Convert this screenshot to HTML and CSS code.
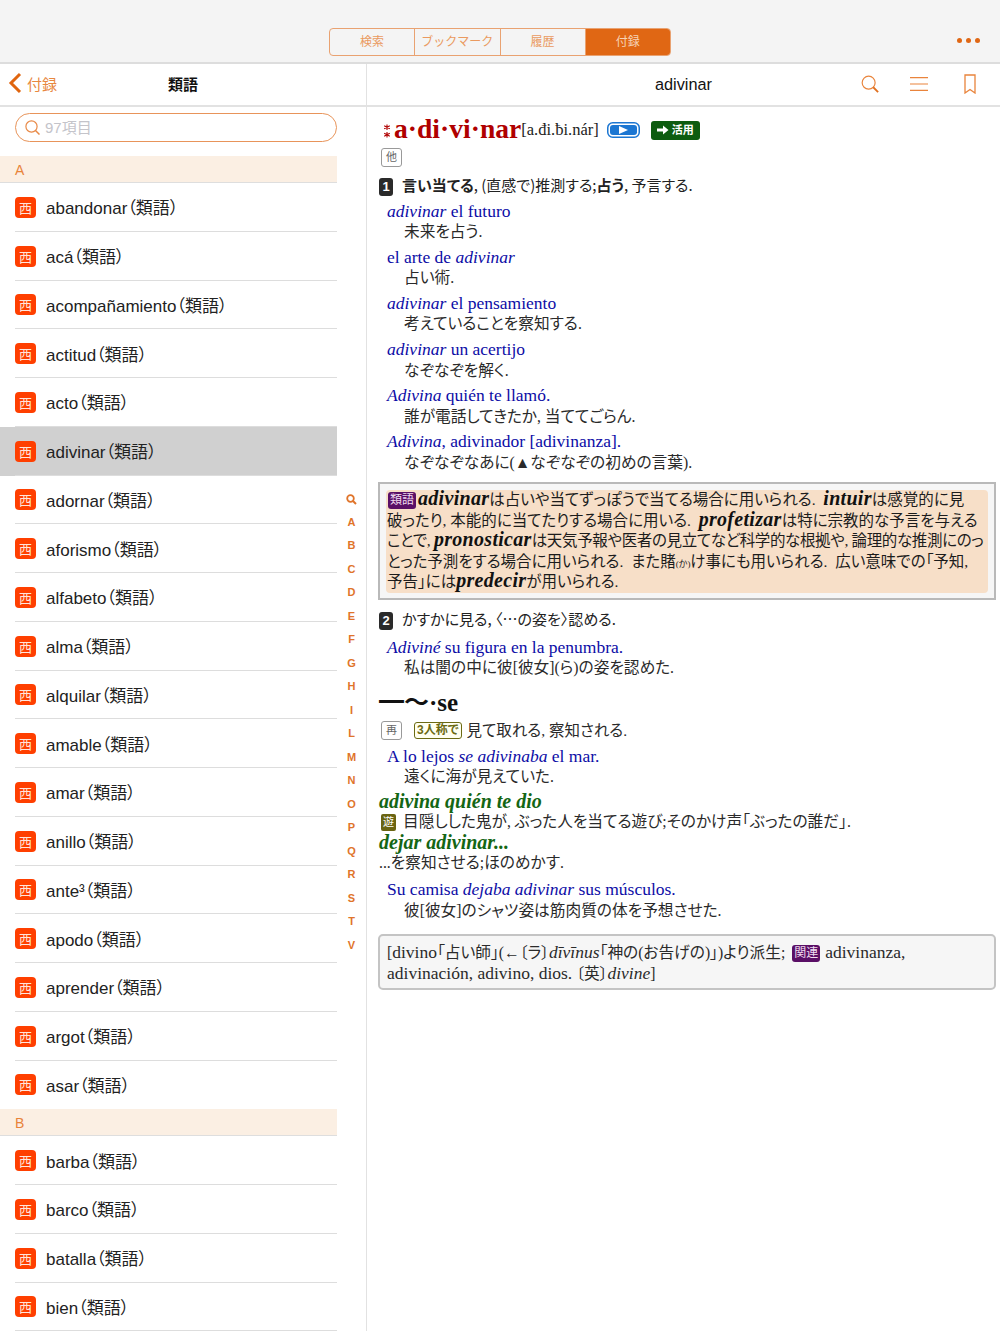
FILE: index.html
```html
<!DOCTYPE html>
<html lang="ja">
<head>
  <meta charset="UTF-8">
  <meta name="viewport" content="width=device-width, initial-scale=1.0">
  <title>adivinar</title>
  <link rel="stylesheet" href="styles.css">
</head>
<body>
  <div class="app">
    <header class="topbar">
      <div class="tabs">
        <div class="tab">検索</div>
        <div class="tab">ブックマーク</div>
        <div class="tab">履歴</div>
        <div class="tab active">付録</div>
      </div>
      <div class="more"><span></span><span></span><span></span></div>
    </header>

    <div class="main">
      <aside class="side">
        <div class="side-nav">
          <div class="back">
            <svg width="14" height="22" viewBox="0 0 14 22"><path d="M12 2 L3 11 L12 20" fill="none" stroke="#e0650f" stroke-width="3"/></svg>
            <span>付録</span>
          </div>
          <div class="side-title">類語</div>
        </div>
        <div class="search-wrap">
          <div class="search">
            <svg width="15" height="15" viewBox="0 0 15 15"><circle cx="6.5" cy="6.5" r="5.6" fill="none" stroke="#e88a48" stroke-width="1.2"/><path d="M10.5 10.5 L14.5 14.5" stroke="#e88a48" stroke-width="1.5"/></svg>
            <span>97項目</span>
          </div>
        </div>
        <div class="side-body">
          <div class="list">
            <div class="section">A</div>
            <div class="row"><i class="mark">西</i><span>abandonar（類語）</span></div>
            <div class="row"><i class="mark">西</i><span>acá（類語）</span></div>
            <div class="row"><i class="mark">西</i><span>acompañamiento（類語）</span></div>
            <div class="row"><i class="mark">西</i><span>actitud（類語）</span></div>
            <div class="row"><i class="mark">西</i><span>acto（類語）</span></div>
            <div class="row selected"><i class="mark">西</i><span>adivinar（類語）</span></div>
            <div class="row"><i class="mark">西</i><span>adornar（類語）</span></div>
            <div class="row"><i class="mark">西</i><span>aforismo（類語）</span></div>
            <div class="row"><i class="mark">西</i><span>alfabeto（類語）</span></div>
            <div class="row"><i class="mark">西</i><span>alma（類語）</span></div>
            <div class="row"><i class="mark">西</i><span>alquilar（類語）</span></div>
            <div class="row"><i class="mark">西</i><span>amable（類語）</span></div>
            <div class="row"><i class="mark">西</i><span>amar（類語）</span></div>
            <div class="row"><i class="mark">西</i><span>anillo（類語）</span></div>
            <div class="row"><i class="mark">西</i><span>ante³（類語）</span></div>
            <div class="row"><i class="mark">西</i><span>apodo（類語）</span></div>
            <div class="row"><i class="mark">西</i><span>aprender（類語）</span></div>
            <div class="row"><i class="mark">西</i><span>argot（類語）</span></div>
            <div class="row last"><i class="mark">西</i><span>asar（類語）</span></div>
            <div class="section">B</div>
            <div class="row"><i class="mark">西</i><span>barba（類語）</span></div>
            <div class="row"><i class="mark">西</i><span>barco（類語）</span></div>
            <div class="row"><i class="mark">西</i><span>batalla（類語）</span></div>
            <div class="row"><i class="mark">西</i><span>bien（類語）</span></div>
          </div>
          <div class="index">
            <div><svg width="11" height="11" viewBox="0 0 11 11"><circle cx="4.5" cy="4.5" r="3.3" fill="none" stroke="#e0742a" stroke-width="1.8"/><path d="M7 7 L10 10" stroke="#e0742a" stroke-width="2"/></svg></div>
            <div>A</div><div>B</div><div>C</div><div>D</div><div>E</div><div>F</div><div>G</div><div>H</div><div>I</div>
            <div>L</div><div>M</div><div>N</div><div>O</div><div>P</div><div>Q</div><div>R</div><div>S</div><div>T</div><div>V</div>
          </div>
        </div>
      </aside>

      <section class="detail">
        <div class="detail-nav">
          <div class="detail-title">adivinar</div>
          <div class="detail-icons">
            <svg class="icon-search" width="18" height="18" viewBox="0 0 20 20"><circle cx="8.5" cy="8.5" r="7.2" fill="none" stroke="#e9843c" stroke-width="1.3"/><path d="M13.6 13.6 L19 19" stroke="#e0701f" stroke-width="2"/></svg>
            <svg class="icon-menu" width="18" height="14" viewBox="0 0 18 14"><path d="M0 .7 H18 M0 7 H18 M0 13.3 H18" stroke="#e9843c" stroke-width="1.2"/></svg>
            <svg width="12" height="20" viewBox="0 0 12 20"><path d="M1 1 H11 V19 L6 15.5 L1 19 Z" fill="none" stroke="#e9843c" stroke-width="1.3"/></svg>
          </div>
        </div>

        <article class="entry">
          <div class="head">
            <svg class="stars" width="8" height="14" viewBox="0 0 8 14"><path d="M4 .5 V6 M1.2 1.8 L6.8 4.8 M6.8 1.8 L1.2 4.8 M4 8 V13.5 M1.2 9.3 L6.8 12.2 M6.8 9.3 L1.2 12.2" stroke="#b00000" stroke-width="1.1"/></svg>
            <span class="word">a·di·vi·nar</span>
            <span class="pron">[a.đi.ƀi.nár]</span>
            <svg class="audio" width="33" height="16" viewBox="0 0 33 16"><rect x="0.75" y="0.75" width="31.5" height="14.5" rx="5" fill="#fff" stroke="#1b76d2" stroke-width="1.5"/><rect x="3" y="3" width="27" height="10" rx="3" fill="#1b76d2"/><path d="M12 4 L21 8 L12 12 Z" fill="#fff"/></svg>
            <span class="conj"><svg width="12" height="10" viewBox="0 0 12 10"><path d="M0 3.5 H6 V0.5 L11.5 5 L6 9.5 V6.5 H0 Z" fill="#fff"/></svg>活用</span>
          </div>
          <div class="pos-line"><span class="tag">他</span></div>

          <p class="sense"><span class="num">1</span><b>言い当てる</b>, (直感で)推測する;<b>占う</b>, 予言する.</p>

          <div class="ex">
            <div class="es"><em>adivinar</em> el futuro</div>
            <div class="ja">未来を占う.</div>
          </div>
          <div class="ex">
            <div class="es">el arte de <em>adivinar</em></div>
            <div class="ja">占い術.</div>
          </div>
          <div class="ex">
            <div class="es"><em>adivinar</em> el pensamiento</div>
            <div class="ja">考えていることを察知する.</div>
          </div>
          <div class="ex">
            <div class="es"><em>adivinar</em> un acertijo</div>
            <div class="ja">なぞなぞを解く.</div>
          </div>
          <div class="ex">
            <div class="es"><em>Adivina</em> quién te llamó.</div>
            <div class="ja">誰が電話してきたか, 当ててごらん.</div>
          </div>
          <div class="ex">
            <div class="es"><em>Adivina</em>, adivinador [adivinanza].</div>
            <div class="ja">なぞなぞなあに(▲なぞなぞの初めの言葉).</div>
          </div>

          <div class="usage">
            <div class="usage-inner"><span class="label">類語</span><strong>adivinar</strong>は占いや当てずっぽうで当てる場合に用いられる.&ensp;<strong>intuir</strong>は感覚的に見<br>破ったり, 本能的に当てたりする場合に用いる.&ensp;<strong>profetizar</strong>は特に宗教的な予言を与える<br><span class="tight">ことで, <strong>pronosticar</strong>は天気予報や医者の見立てなど科学的な根拠や, 論理的な推測にのっ</span><br>とった予測をする場合に用いられる.&ensp;また賭<small>(か)</small>け事にも用いられる.&ensp;広い意味での「予知,<br>予告」には<strong>predecir</strong>が用いられる.</div>
          </div>

          <p class="sense second"><span class="num">2</span>かすかに見る, 〈…の姿を〉認める.</p>
          <div class="ex">
            <div class="es"><em>Adiviné</em> su figura en la penumbra.</div>
            <div class="ja">私は闇の中に彼[彼女](ら)の姿を認めた.</div>
          </div>

          <h3 class="sub">━〜·se</h3>
          <p class="sense-plain"><span class="tag">再</span><span class="tag-olive">3人称で</span>見て取れる, 察知される.</p>
          <div class="ex">
            <div class="es">A lo lejos <em>se adivinaba</em> el mar.</div>
            <div class="ja">遠くに海が見えていた.</div>
          </div>

          <div class="idiom">adivina quién te dio</div>
          <p class="idiom-def"><span class="play">遊</span>目隠しした鬼が, ぶった人を当てる遊び;そのかけ声「ぶったの誰だ」.</p>
          <div class="idiom">dejar adivinar...</div>
          <p class="idiom-def">...を察知させる;ほのめかす.</p>
          <div class="ex">
            <div class="es">Su camisa <em>dejaba adivinar</em> sus músculos.</div>
            <div class="ja">彼[彼女]のシャツ姿は筋肉質の体を予想させた.</div>
          </div>

          <div class="etym">[<span class="la">divino</span>「占い師」(←〔ラ〕<em class="la">dīvīnus</em>「神の(お告げの)」)より派生; <span class="label">関連</span> <span class="la">adivinanza,</span><br><span class="la">adivinación, adivino, dios.</span> 〔英〕<em class="la">divine</em>]</div>
        </article>
      </section>
    </div>
  </div>
</body>
</html>
```

FILE: styles.css
```css
* {
  box-sizing: border-box;
}

html, body {
  margin: 0;
  padding: 0;
  background-color: #ffffff;
}

body {
  font-family: "Liberation Sans", "Noto Sans CJK JP", sans-serif;
  color: #1c1c1c;
}

.app {
  width: 1000px;
  height: 1334px;
  overflow: hidden;
}

/* top bar */
.topbar {
  height: 64px;
  background-color: #f4f4f4;
  border-bottom: 2px solid #dddddd;
  padding: 28px 20px 0 329px;
  display: flex;
  justify-content: space-between;
}

.tabs {
  display: flex;
  width: 342px;
  height: 28px;
  border: 1px solid #e9a271;
  border-radius: 4px;
  overflow: hidden;
}

.tab {
  flex: 1;
  font-size: 12px;
  line-height: 27px;
  text-align: center;
  color: #ea9a60;
  border-right: 1px solid #e9a271;
}

.tab.active {
  background-color: #e06714;
  color: #f6d3b6;
  border-right: none;
}

.more {
  display: flex;
  gap: 4px;
  padding-top: 10px;
}

.more span {
  width: 5px;
  height: 5px;
  border-radius: 50%;
  background-color: #e06714;
}

.main {
  display: flex;
}

/* left column */
.side {
  width: 367px;
  flex-shrink: 0;
  border-right: 1px solid #e2e2e2;
}

.side-nav {
  position: relative;
  height: 43px;
  border-bottom: 2px solid #e2e2e2;
  display: flex;
  align-items: center;
  justify-content: center;
}

.back {
  position: absolute;
  left: 8px;
  top: 8px;
  display: flex;
  align-items: center;
  gap: 5px;
  font-size: 15px;
  color: #e8873f;
}

.side-title {
  font-size: 15px;
  font-weight: bold;
  color: #111111;
  padding-bottom: 2px;
}

.search-wrap {
  padding: 6px 29px 14px 15px;
}

.search {
  height: 29px;
  border: 1px solid #e8945a;
  border-radius: 15px;
  display: flex;
  align-items: center;
  gap: 5px;
  padding-left: 9px;
  font-size: 15px;
  color: #c4c4ca;
}

.search span {
  padding-bottom: 2px;
}

.side-body {
  display: flex;
}

.list {
  width: 337px;
  flex-shrink: 0;
}

.section {
  height: 27px;
  background-color: #fbefe3;
  border-bottom: 1px solid #dedede;
  padding-left: 15px;
  font-size: 14px;
  line-height: 29px;
  color: #e8833a;
}

.row {
  height: 48.75px;
  display: flex;
  align-items: center;
  gap: 10px;
  padding-left: 15px;
  font-size: 17px;
  font-feature-settings: "palt";
  color: #222222;
  position: relative;
}

.row span {
  padding-bottom: 1px;
}

.row::after {
  content: "";
  position: absolute;
  left: 15px;
  right: 0;
  bottom: 0;
  height: 1px;
  background-color: #dddddd;
}

.row.last::after {
  display: none;
}

.row.selected {
  background-color: #d0d0d0;
}

.mark {
  width: 21px;
  height: 21px;
  border-radius: 4px;
  background-color: #ff3f00;
  color: #ffe6dc;
  font-style: normal;
  font-size: 13px;
  display: flex;
  align-items: center;
  justify-content: center;
}

.index {
  flex: 1;
  padding-top: 331px;
  font-size: 11px;
  font-weight: bold;
  color: #e0742a;
  text-align: center;
}

.index div {
  height: 23.5px;
  line-height: 23.5px;
}

.index svg {
  vertical-align: middle;
}

/* right column */
.detail {
  flex: 1;
  min-width: 0;
}

.detail-nav {
  position: relative;
  height: 43px;
  border-bottom: 2px solid #e2e2e2;
  display: flex;
  align-items: center;
  justify-content: center;
}

.detail-title {
  font-size: 16.3px;
  color: #111111;
}

.detail-icons {
  position: absolute;
  right: 24px;
  top: 10px;
  display: flex;
  align-items: center;
}

.icon-search {
  margin-right: 31px;
}

.icon-menu {
  margin-right: 36px;
}

.entry {
  padding: 9px 4px 0 12px;
  font-family: "Liberation Serif", "Noto Sans CJK JP", serif;
  font-size: 17.5px;
  line-height: 20.5px;
  font-feature-settings: "palt";
}

.head {
  display: flex;
  align-items: center;
  height: 27px;
  padding-left: 4px;
  padding-top: 1px;
}

.stars {
  margin-right: 3px;
  margin-top: 2px;
}

.word {
  font-size: 27.6px;
  font-weight: bold;
  color: #b00000;
  margin-top: -2px;
}

.pron {
  font-size: 16.5px;
  margin-right: 8px;
}

.audio {
  margin-right: 11px;
}

.conj {
  display: flex;
  align-items: center;
  gap: 3px;
  height: 19px;
  padding: 0 6px;
  background-color: #0d5c10;
  border-radius: 3px;
  font-family: "Liberation Sans", "Noto Sans CJK JP", sans-serif;
  font-size: 11px;
  font-weight: bold;
  color: #ffffff;
}

.pos-line {
  height: 32px;
  padding: 5px 0 0 2px;
}

.tag {
  display: inline-block;
  width: 21px;
  height: 19px;
  border: 1px solid #999999;
  border-radius: 3px;
  font-family: "Liberation Sans", "Noto Sans CJK JP", sans-serif;
  font-size: 11px;
  line-height: 17px;
  text-align: center;
  color: #666666;
  vertical-align: top;
}

.sense {
  margin: 0 0 5px;
  height: 20.5px;
  font-family: "Noto Sans CJK JP", sans-serif;
  font-size: 15px;
  color: #222222;
}

.num {
  display: inline-block;
  width: 14px;
  height: 18px;
  margin-right: 9px;
  background-color: #2a2a2a;
  border-radius: 3px;
  color: #ffffff;
  font-family: "Liberation Sans", sans-serif;
  font-weight: bold;
  font-size: 13px;
  line-height: 18px;
  text-align: center;
}

.ex {
  padding-left: 8px;
  margin-bottom: 4.2px;
}

.es {
  color: #0c0ca6;
}

.ja {
  padding: 1px 0 0 17px;
  font-size: 15.7px;
  color: #2a2a2a;
}

.usage {
  margin: 9px 0 9px -1px;
  height: 118px;
  padding: 6px 6px;
  border: 2px solid #b9b9b9;
  background-color: #f6f6f6;
}

.usage-inner {
  background-color: #f7dfc8;
  border-radius: 4px;
  padding-left: 1px;
  font-size: 15.5px;
  white-space: nowrap;
  color: #1c1c1c;
}

.usage strong {
  font-size: 20px;
  line-height: 0;
  letter-spacing: 0.3px;
  font-style: italic;
  color: #111111;
}

.usage small {
  font-size: 9px;
  line-height: 0;
}

.tight {
  letter-spacing: -0.35px;
}

.label {
  display: inline-block;
  height: 17px;
  padding: 0 2px;
  background-color: #5a0f66;
  border-radius: 3px;
  font-family: "Liberation Sans", "Noto Sans CJK JP", sans-serif;
  font-size: 12px;
  line-height: 17px;
  color: #f0dcf0;
  vertical-align: top;
  margin-top: 2px;
}

.usage .label {
  margin: 2px 2px 0 1px;
}

.sense.second {
  margin-bottom: 7px;
}

.sub {
  margin: 11px 0 5px;
  font-size: 25px;
  line-height: 26px;
  font-weight: bold;
  color: #111111;
}

.sense-plain {
  margin: 0 0 4.5px;
  padding-left: 2px;
  font-size: 15.5px;
  color: #2a2a2a;
}

.tag-olive {
  display: inline-block;
  height: 17px;
  margin: 1px 5px 0 12px;
  padding: 0 2px;
  border: 1px solid #6b6a12;
  border-radius: 3px;
  background-color: #fffff0;
  font-family: "Liberation Sans", "Noto Sans CJK JP", sans-serif;
  font-size: 12px;
  font-weight: bold;
  line-height: 15px;
  color: #6b6a12;
  vertical-align: top;
}

.idiom {
  font-size: 20px;
  font-weight: bold;
  font-style: italic;
  color: #146614;
}

.ex + .idiom {
  margin-top: -1px;
}

.idiom-def {
  margin: 0;
  font-size: 15.7px;
  color: #2a2a2a;
}

.idiom-def + .ex {
  margin-top: 6px;
}

.play {
  display: inline-block;
  width: 15px;
  height: 17px;
  margin: 2px 7px 0 2px;
  background-color: #6a6412;
  border-radius: 2px;
  font-family: "Liberation Sans", "Noto Sans CJK JP", sans-serif;
  font-size: 11px;
  line-height: 17px;
  text-align: center;
  color: #ffffff;
  vertical-align: top;
}

.etym {
  margin: 13px 0 0 -1px;
  height: 56px;
  padding: 7px 7px;
  border: 2px solid #c4c4c4;
  border-radius: 5px;
  background-color: #f6f6f6;
  font-size: 15.7px;
  color: #2a2a2a;
}

.la {
  font-size: 17.5px;
  line-height: 0;
}

.etym .label {
  margin: 2px 1px 0 3px;
}
```
